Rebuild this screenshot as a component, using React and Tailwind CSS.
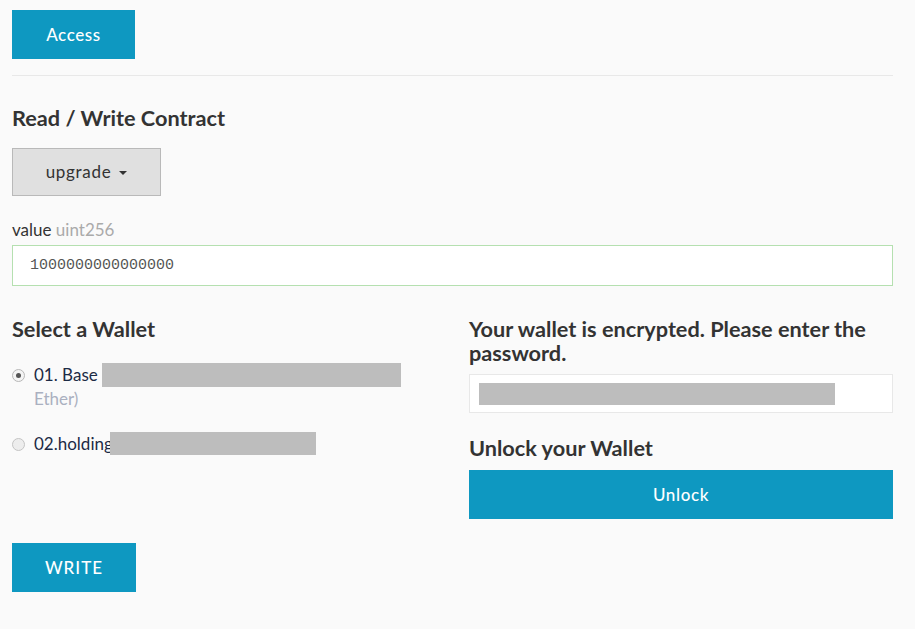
import React from "react";

export default function App() {
  return (
    <div className="min-h-screen bg-[#fafafa] pl-[12px] pr-[22px] pt-[10px] text-[#333]">
      <div className="font-['Lato','Liberation_Sans',sans-serif]">
        <button className="h-[49px] w-[123px] bg-[#0e98c1] text-[17px] font-medium tracking-[0.6px] text-white">
          Access
        </button>
        <div className="mt-[16px] h-px w-full bg-[#e8e8e8]" />
        <h2 className="mt-[28px] text-[21.7px] font-bold leading-[28px] text-[#333]">Read / Write Contract</h2>
        <button className="mt-[16px] flex h-[48px] w-[149px] items-center justify-center gap-[8px] border border-[#b9b9b9] bg-[#e0e0e0] text-[17px] tracking-[0.7px] text-[#333]">
          upgrade
          <span className="mt-[2px] inline-block h-0 w-0 border-x-[4px] border-t-[4px] border-x-transparent border-t-[#333]" />
        </button>
        <div className="mt-[24px] text-[17px] leading-[20px]">
          value <span className="text-[#aaa]">uint256</span>
        </div>
        <div className="mt-[5px] flex h-[41px] w-full items-center border border-[#b5e0b0] bg-white pl-[17px] pt-[2px] font-['Liberation_Mono',monospace] text-[15px] text-[#555]">
          1000000000000000
        </div>
        <div className="mt-[31px] grid grid-cols-[433px_424px] gap-x-[24px]">
          <div>
            <h3 className="text-[21.7px] font-bold leading-[24px] text-[#333]">Select a Wallet</h3>
            <div className="mt-[22px] flex items-start gap-[9px]">
              <span className="mt-[6px] flex h-[13px] w-[13px] shrink-0 items-center justify-center rounded-full border border-[#b8b8b8] bg-[#f4f4f4]">
                <span className="h-[5px] w-[5px] rounded-full bg-[#555]" />
              </span>
              <div className="w-[380px] text-[17px] leading-[24px] text-[#1c2a45]">
                01. Base{" "}
                <span className="inline-block h-[24px] w-[299px] bg-[#bdbdbd] align-top" />
                <span className="text-[#aab0c0]">Ether)</span>
              </div>
            </div>
            <div className="mt-[21px] flex items-start gap-[9px]">
              <span className="mt-[6px] h-[13px] w-[13px] shrink-0 rounded-full border border-[#c4c4c4] bg-[#ededed]" />
              <div className="relative text-[17px] leading-[24px] text-[#1c2a45]">
                02.holding
                <span className="absolute left-[76px] top-0 h-[23px] w-[206px] bg-[#bdbdbd]" />
              </div>
            </div>
          </div>
          <div>
            <h3 className="text-[21.7px] font-bold leading-[24px] text-[#333]">
              Your wallet is encrypted. Please enter the password.
            </h3>
            <div className="mt-[9px] flex h-[39px] w-full items-center border border-[#e8e8e8] bg-white pl-[9px]">
              <span className="h-[22px] w-[356px] bg-[#bdbdbd]" />
            </div>
            <h3 className="mt-[23px] text-[21.7px] font-bold leading-[24px] text-[#333]">Unlock your Wallet</h3>
            <button className="mt-[10px] h-[49px] w-full bg-[#0e98c1] text-[17px] font-medium tracking-[0.6px] text-white">
              Unlock
            </button>
          </div>
        </div>
        <button className="mt-[24px] h-[49px] w-[124px] bg-[#0e98c1] text-[17px] font-medium tracking-[1px] text-white">
          WRITE
        </button>
      </div>
    </div>
  );
}
